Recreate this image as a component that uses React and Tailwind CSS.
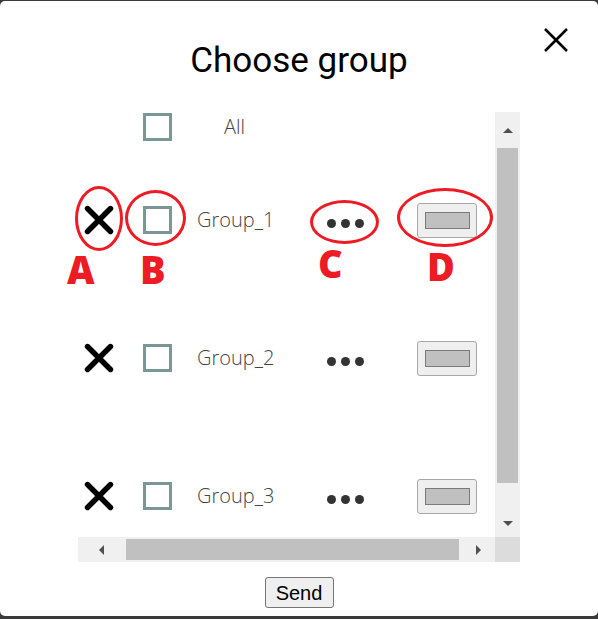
import React from "react";

const RED = "border-[#ed1c24]";

function BigX() {
  return (
    <svg width="30" height="30" viewBox="0 0 30 30">
      <path d="M3.5 3.5 L26.5 26.5 M26.5 3.5 L3.5 26.5" stroke="#000" strokeWidth="5.4" strokeLinecap="round" fill="none" />
    </svg>
  );
}

function Box() {
  return <div className="w-[29px] h-[28px] border-[3px] border-[#7a9696] bg-white" />;
}

function Dots() {
  return (
    <div className="flex gap-[5px] mt-[6px]">
      <div className="w-[9px] h-[9px] rounded-full bg-[#333]" />
      <div className="w-[9px] h-[9px] rounded-full bg-[#333]" />
      <div className="w-[9px] h-[9px] rounded-full bg-[#333]" />
    </div>
  );
}

function ColorBtn() {
  return (
    <div className="w-[60px] h-[35px] bg-[#efefef] border border-[#a8a8a8] rounded-[3px] flex items-center justify-center">
      <div className="w-[45px] h-[17px] bg-[#c0c0c0] border border-[#7a7a7a]" />
    </div>
  );
}

function Row({ name }) {
  return (
    <div className="h-[138px] flex items-center pl-[6px] shrink-0">
      <div className="w-[59px] flex"><BigX /></div>
      <div className="w-[54px] flex"><Box /></div>
      <div className="w-[130px] text-[20px] font-light text-[#444444] leading-none" style={{ fontFamily: '"Open Sans", sans-serif' }}>
        {name}
      </div>
      <div className="w-[90px] flex"><Dots /></div>
      <ColorBtn />
    </div>
  );
}

function Tri({ dir }) {
  const cls = {
    up: "border-l-[5px] border-r-[5px] border-b-[5px] border-l-transparent border-r-transparent border-b-[#505050]",
    down: "border-l-[5px] border-r-[5px] border-t-[5px] border-l-transparent border-r-transparent border-t-[#505050]",
    left: "border-t-[5px] border-b-[5px] border-r-[5px] border-t-transparent border-b-transparent border-r-[#505050]",
    right: "border-t-[5px] border-b-[5px] border-l-[5px] border-t-transparent border-b-transparent border-l-[#505050]",
  }[dir];
  return <div className={"w-0 h-0 " + cls} />;
}

export default function App() {
  return (
    <div className="w-[598px] h-[619px] bg-[#3a3a3a] pt-[1px] overflow-hidden">
      <div className="relative bg-white rounded-[5px] h-[615px] flex flex-col">
        {/* header */}
        <div className="h-[111px] shrink-0 pt-[40px] flex justify-center">
          <div className="text-[35px] leading-[40px] text-black" style={{ fontFamily: "Roboto, sans-serif" }}>
            Choose group
          </div>
        </div>
        <button className="absolute top-[27px] right-[30px] w-[24px] h-[24px]">
          <svg width="24" height="24" viewBox="0 0 24 24">
            <path d="M1 1 L23 23 M23 1 L1 23" stroke="#000" strokeWidth="2.6" fill="none" />
          </svg>
        </button>

        {/* scroll box */}
        <div className="ml-[78px] w-[442px] h-[450px] flex flex-col shrink-0">
          <div className="flex h-[425px]">
            <div className="w-[417px] h-[425px] overflow-hidden flex flex-col">
              <div className="h-[30px] flex items-center pl-[65px] shrink-0">
                <Box />
                <div className="ml-[52px] text-[20px] font-light text-[#444444] leading-none" style={{ fontFamily: '"Open Sans", sans-serif' }}>
                  All
                </div>
              </div>
              <div className="h-[9px] shrink-0" />
              <Row name="Group_1" />
              <Row name="Group_2" />
              <Row name="Group_3" />
            </div>
            <div className="w-[25px] bg-[#f0f0f0] flex flex-col">
              <div className="h-[36px] flex items-center justify-center"><Tri dir="up" /></div>
              <div className="mx-[2px] h-[335px] bg-[#c0c0c0]" />
              <div className="flex-1 flex items-end justify-center pb-[11px]"><Tri dir="down" /></div>
            </div>
          </div>
          <div className="flex h-[25px]">
            <div className="w-[417px] bg-[#f0f0f0] flex items-center">
              <div className="w-[48px] flex justify-center pr-[2px]"><Tri dir="left" /></div>
              <div className="w-[333px] h-[21px] bg-[#c0c0c0]" />
              <div className="flex-1 flex justify-center pl-[2px]"><Tri dir="right" /></div>
            </div>
            <div className="w-[25px] bg-[#dcdcdc]" />
          </div>
        </div>

        {/* send */}
        <div className="flex justify-center mt-[15px]">
          <button
            className="w-[69px] h-[31px] bg-[#efefef] border border-[#767676] rounded-[3px] text-[20px] leading-none text-black"
            style={{ fontFamily: '"Liberation Sans", Arial, sans-serif' }}
          >
            Send
          </button>
        </div>

        {/* annotations */}
        <div className={"absolute left-[75px] top-[185px] w-[48px] h-[65px] rounded-[50%] border-[3px] " + RED} />
        <div className={"absolute left-[125px] top-[189px] w-[61px] h-[56px] rounded-[50%] border-[3px] " + RED} />
        <div className={"absolute left-[310px] top-[199px] w-[69px] h-[44px] rounded-[50%] border-[3px] " + RED} />
        <div className={"absolute left-[397px] top-[187px] w-[96px] h-[59px] rounded-[50%] border-[3px] " + RED} />
        {[
          ["A", 67, 249],
          ["B", 140, 249],
          ["C", 318, 243],
          ["D", 427, 246],
        ].map(([t, l, tp]) => (
          <span
            key={t}
            className="absolute text-[38px] font-extrabold leading-none text-[#ed1c24]"
            style={{ left: l, top: tp, fontFamily: '"Open Sans", sans-serif' }}
          >
            {t}
          </span>
        ))}
      </div>
    </div>
  );
}
